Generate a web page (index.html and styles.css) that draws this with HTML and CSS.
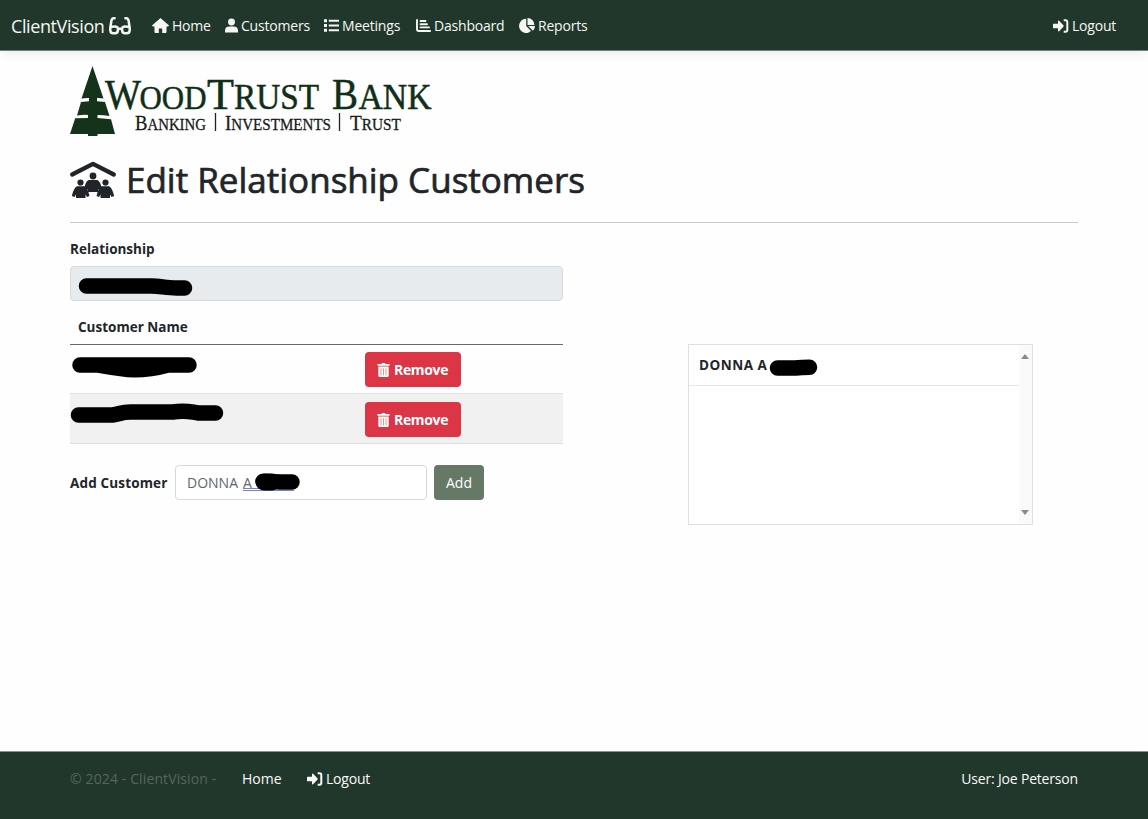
FILE: index.html
```html
<!DOCTYPE html>
<html lang="en">
<head>
<meta charset="utf-8">
<title>Edit Relationship Customers - ClientVision</title>
<link rel="stylesheet" href="styles.css">
</head>
<body>
<svg width="0" height="0" class="sprite" aria-hidden="true">
  <symbol id="logout" viewBox="0 0 16 14"><path d="M.5 4.700h4.500V2q.4-.8 1.100-.2l4.300 4.500q.5.700 0 1.400l-4.300 4.500q-.7.600-1.100-.2V9.300H.5Q0 9.300 0 8.800V5.200q0-.5.500-.5z" fill="currentColor"/><path d="M10.700 1.200h1.800q1.800 0 1.800 1.800v8q0 1.800-1.800 1.800h-1.800" fill="none" stroke="currentColor" stroke-width="2"/></symbol>
  <symbol id="trash" viewBox="0 0 12 14"><path d="M0 1h4l.6-1h2.800L8 1h4v1.700H0zM.8 3.600h10.400v9.100q0 1.300-1.300 1.300H2.100Q.8 14 .8 12.700z" fill="#fff"/><path d="M3.500 5.300v7M6 5.300v7M8.500 5.300v7" stroke="#e58a75" stroke-width=".9"/></symbol>
</svg>
<header class="navbar">
  <a class="brand"><span class="brand-name">ClientVision</span>
    <svg width="22" height="18" viewBox="0 0 22 18" fill="none" stroke="currentColor" stroke-width="2.500" stroke-linecap="round"><path d="M5.600 1.300Q3.200.7 2.500 3.200L1.300 10.500v2.700q0 3 3 3h1.600q3 0 3-3v-1.600q0-1.600-1.600-1.900-3-.6-6 .6M16.400 1.300q2.400-.6 3.100 1.900l1.200 7.300v2.700q0 3-3 3h-1.600q-3 0-3-3v-1.600q0-1.600 1.600-1.900 3-.6 6 .6M9 11.800h4"/></svg></a>
  <nav class="menu">
    <a class="item home"><svg width="17" height="15" viewBox="0 0 17 15"><path d="M8.500 0 17 7.500l-.8 1h-1.700V14q0 1-1 1h-3.300v-4.600H6.800V15H3.500q-1 0-1-1V8.500H.8L0 7.500z" fill="currentColor"/></svg><span>Home</span></a>
    <a class="item customers"><svg width="13" height="15" viewBox="0 0 14 15"><circle cx="7" cy="3.700" r="3.700" fill="currentColor"/><path d="M0 15v-1.500q0-4.800 4.800-4.800h4.400q4.800 0 4.800 4.800V15z" fill="currentColor"/></svg><span>Customers</span></a>
    <a class="item meetings"><svg width="15" height="13" viewBox="0 0 15 13"><path d="M0 .3h3v3H0zM0 5h3v3H0zM0 9.700h3v3H0zM4.800.8H15v2H4.800zM4.800 5.500H15v2H4.800zM4.800 10.200H15v2H4.800z" fill="currentColor"/></svg><span>Meetings</span></a>
    <a class="item dashboard"><svg width="15" height="13" viewBox="0 0 15 13" fill="none" stroke="currentColor" stroke-width="1.900" stroke-linecap="round"><path d="M1 .9v9.300q0 1.800 1.800 1.800h11.300M4.500 2h5M4.500 5.200h6.500M4.500 8.400h8.500"/></svg><span>Dashboard</span></a>
    <a class="item reports"><svg width="16" height="15" viewBox="0 0 16 15"><path d="M7.200.8v7.300l4.800 5A7.100 7.100 0 1 1 7.200.8z" fill="currentColor"/><path d="M8.500 0a7 7 0 0 1 6.900 6.900H8.500zM9.200 8.100H16a7 7 0 0 1-2.100 4.700z" fill="currentColor"/></svg><span>Reports</span></a>
  </nav>
  <a class="item signout"><svg width="16" height="14"><use href="#logout"/></svg><span>Logout</span></a>
</header>
<main class="page">
  <svg class="logo" width="364" height="72" viewBox="70 65 364 72">
    <path d="M92.500 66 103.500 98.500Q99 97.600 97 98v3.200l8 .8 4.500 14Q101 114.500 97.500 115v3l13.500 1.300 4 14.700H97.500v2H88v-2H70l5.200-15.700L88 118v-3q-4-.5-11 .5l4-13.500 8-.8V98q-3-.4-7.500.5z" fill="#15331a"/>
    <text class="logo-name" y="109"><tspan x="105" font-size="43" textLength="36" lengthAdjust="spacingAndGlyphs">W</tspan><tspan x="139.500" font-size="34" textLength="67" lengthAdjust="spacingAndGlyphs">OOD</tspan><tspan x="207" font-size="45" textLength="27" lengthAdjust="spacingAndGlyphs">T</tspan><tspan x="234" font-size="35.500" textLength="85" lengthAdjust="spacingAndGlyphs">RUST</tspan><tspan x="332" font-size="44" textLength="26" lengthAdjust="spacingAndGlyphs">B</tspan><tspan x="358.500" font-size="35.500" textLength="73" lengthAdjust="spacingAndGlyphs">ANK</tspan></text>
    <g class="logo-tagline"><text x="135" y="130" textLength="71" lengthAdjust="spacingAndGlyphs">B<tspan class="small">ANKING</tspan></text><text x="225" y="130" textLength="106" lengthAdjust="spacingAndGlyphs">I<tspan class="small">NVESTMENTS</tspan></text><text x="350" y="130" textLength="51" lengthAdjust="spacingAndGlyphs">T<tspan class="small">RUST</tspan></text></g>
    <path d="M215.500 113v18M339.500 113v18" stroke="#222" stroke-width="1.300"/>
  </svg>
  <div class="title">
    <svg width="46" height="38" viewBox="0 0 46 38" fill="#212529"><path d="M2.200 13.500 23 2.800l20.800 10.700" fill="none" stroke="#212529" stroke-width="4.300" stroke-linecap="round" stroke-linejoin="round"/><circle cx="10.500" cy="21.500" r="3.100"/><circle cx="35.500" cy="21.500" r="3.100"/><path d="M7 25.200h7.500q3 1 5 9.800l-2.500 1-1.500-2.500V37H6v-3.500L4.500 36 1.800 35Q4 26.200 7 25.200zM31.500 25.200H39q3 1 5.200 9.800l-2.700 1-1.500-2.500V37h-9.500v-3.500L29 36l-2.500-1q2-8.800 5-9.800z"/><circle cx="23" cy="15" r="3.400"/><path d="M18.800 19h8.400q3.500 1.200 4.700 9.500l-2.700 1.300-1.200-2V31H18v-3.200l-1.200 2-2.700-1.300q1.200-8.300 4.700-9.500z"/></svg>
    <h1>Edit Relationship Customers</h1>
  </div>
  <div class="columns">
    <section class="form">
      <label class="strong relationship-label"><span>Relationship</span></label>
      <div class="readonly"><svg width="124" height="22"><path d="M15.500 11h65c8 0 15 2 25 2h8" class="mark"/></svg></div>
      <div class="table">
        <div class="thead strong"><span>Customer Name</span></div>
        <div class="row"><div class="name"><svg width="160" height="28"><path d="M10 12h109M27 12q16 3 31 4.500 20 1 40-4.500" class="mark"/></svg></div><button class="remove"><svg width="13" height="14"><use href="#trash"/></svg><span>Remove</span></button></div>
        <div class="row striped"><div class="name"><svg width="160" height="28"><path d="M8.500 13h34c8-1 8-3 18-3h42c14-2 18 0 26 1h17" class="mark"/></svg></div><button class="remove"><svg width="13" height="14"><use href="#trash"/></svg><span>Remove</span></button></div>
      </div>
      <div class="add-line">
        <label class="strong add-label"><span>Add Customer</span></label>
        <div class="entry"><span class="donna">DONNA</span><span class="initial">A</span><svg width="60" height="24"><path d="M0 17.500h51M0 19.500h51" stroke="#7181cc" stroke-width="1"/><path d="M20 10.500q13 0 17 .5h12" class="mark"/><path d="M21 11h8" class="mark thick"/></svg></div>
        <button class="add"><span>Add</span></button>
      </div>
    </section>
    <aside class="results">
      <div class="list"><div class="result strong"><span>DONNA A</span><svg width="50" height="20"><path d="M8.500 11h18q6-.8 14-.8" class="mark"/></svg></div></div>
      <div class="scrollbar"><i class="up"></i><i class="down"></i></div>
    </aside>
  </div>
</main>
<footer class="footer"><div class="footer-inner">
  <span class="copyright">© 2024 - ClientVision -</span><a class="foot-home">Home</a><a class="item foot-logout"><svg width="16" height="14"><use href="#logout"/></svg><span>Logout</span></a><span class="user">User: Joe Peterson</span>
</div></footer>
</body>
</html>
```
FILE: styles.css
```css
* { box-sizing: border-box; }
body { margin: 0; height: 819px; overflow: hidden; display: flex; flex-direction: column; background: #fefefe; color: #212529; font: 14px/22px "Open Sans", "Noto Sans", sans-serif; }
.sprite { display: none; }
svg { flex: none; display: block; overflow: visible; }
span, a, h1 { white-space: nowrap; }
.navbar { height: 51px; flex: none; display: flex; align-items: center; padding: 1px 31px 0 11px; background: #22372b; border-bottom: 1px solid #718078; box-shadow: 0 3px 10px #00000012; color: #f5f7f4; }
.brand { display: flex; align-items: center; font-size: 18px; width: 141px; }
.brand-name { width: 98px; letter-spacing: -.4px; }
.menu { display: flex; flex: 1; }
.item { display: flex; align-items: center; }
.item svg { margin-right: 3px; }
.item span { letter-spacing: -.2px; }
.menu .home { width: 73px; }
.menu .customers { width: 99px; }
.menu .meetings { width: 92px; }
.menu .dashboard { width: 103px; }
.signout { width: 64px; }
.page { flex: 1; padding: 14px 70px 0; }
.logo { margin-bottom: 16px; }
.logo-name { fill: #102e18; stroke: #102e18; stroke-width: .5px; font-family: "Liberation Serif", serif; }
.logo-tagline { fill: #171a18; stroke: #171a18; stroke-width: .3px; font-family: "Liberation Serif", serif; font-size: 22px; }
.logo-tagline .small { font-size: 17.500px; }
.title { height: 70px; display: flex; border-bottom: 1px solid #c8c9ca; padding-top: 8px; width: 1008px; }
.title h1 { margin: -3px 0 0 10px; font-size: 35px; line-height: 44px; font-weight: 500; -webkit-text-stroke: .7px #212529; }
.columns { display: flex; justify-content: space-between; padding-right: 45px; width: 1008px; }
.form { width: 493px; }
.strong { font-weight: 700; font-size: 13.500px; }
.relationship-label { display: block; padding-top: 15px; height: 43px; }
.readonly { height: 35px; background: #e8ebee; border: 1px solid #d5dade; border-radius: 4px; padding-top: 8px; }
.mark { fill: none; stroke: #000; stroke-width: 15.500px; stroke-linecap: round; stroke-linejoin: round; }
.thick { stroke-width: 17px; }
.thead { height: 44px; padding: 15px 8px 0; border-bottom: 1px solid #666a6d; }
.row { height: 49px; display: flex; border-bottom: 1px solid #dfe2e4; }
.row.striped { height: 50px; background: #f1f1f1; }
.name { width: 295px; padding-top: 8px; }
button { border: 0; border-radius: 4px; color: #fff; font: 700 14px/22px "Open Sans", "Noto Sans", sans-serif; display: flex; align-items: center; padding: 0; }
.remove { background: #dc3545; width: 96px; height: 35px; margin-top: 7px; padding-left: 12px; }
.remove svg { margin-right: 4px; }
.remove span { letter-spacing: -.35px; }
.striped .remove { margin-top: 8px; }
.add-line { display: flex; align-items: center; padding-top: 21px; }
.add-label { width: 105px; letter-spacing: .15px; }
.entry { width: 252px; height: 35px; border: 1px solid #d2d9df; border-radius: 4px; background: #fff; color: #62676c; display: flex; align-items: center; padding-left: 11px; }
.donna { width: 56px; }
.initial { width: 0; }
.add { background: #667967; width: 50px; height: 35px; margin-left: 7px; padding-left: 12px; font-weight: 400; }
.results { width: 345px; height: 181px; margin-top: 121px; border: 1px solid #dedfdf; display: flex; background: #fff; }
.list { flex: 1; }
.result { height: 41px; display: flex; align-items: center; border-bottom: 1px solid #e6e6e6; padding-left: 10px; }
.result span { width: 70px; letter-spacing: .5px; }
.result svg { margin-top: 4px; }
.scrollbar { width: 13px; display: flex; flex-direction: column; justify-content: space-between; padding: 9px 0 9px; background: #fafafa; }
.scrollbar i { width: 0; height: 0; margin-left: 2px; border: 4.500px solid transparent; }
.scrollbar .up { border-bottom: 5px solid #8a8a8a; border-top: 0; }
.scrollbar .down { border-top: 5px solid #8a8a8a; border-bottom: 0; }
.footer { height: 68px; flex: none; background: #22372b; border-top: 1px solid #87928c; padding: 16px 70px 0; color: #fafafa; }
.footer-inner { display: flex; }
.copyright { width: 172px; color: #56665c; letter-spacing: .12px; }
.foot-home { width: 65px; }
.user { margin-left: auto; letter-spacing: -.18px; }
```
